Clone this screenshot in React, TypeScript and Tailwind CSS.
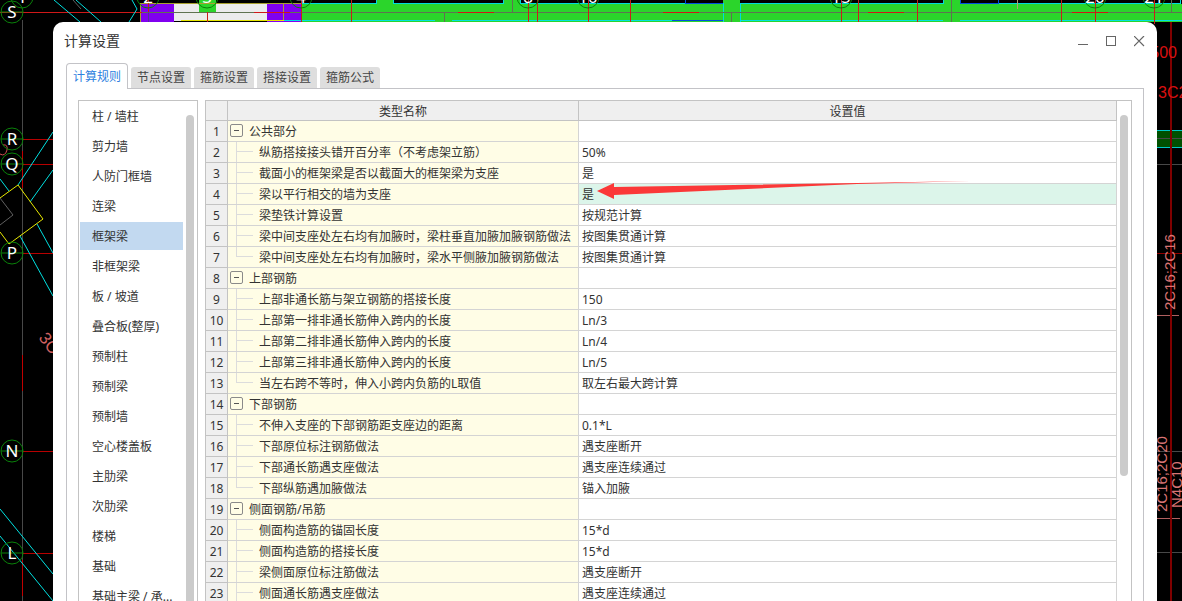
import React from "react";

type Row = { name: string; value?: string; group?: boolean; last?: boolean; active?: boolean };

const tabs = ["计算规则", "节点设置", "箍筋设置", "搭接设置", "箍筋公式"];

const components = [
  "柱 / 墙柱",
  "剪力墙",
  "人防门框墙",
  "连梁",
  "框架梁",
  "非框架梁",
  "板 / 坡道",
  "叠合板(整厚)",
  "预制柱",
  "预制梁",
  "预制墙",
  "空心楼盖板",
  "主肋梁",
  "次肋梁",
  "楼梯",
  "基础",
  "基础主梁 / 承...",
];

const rows: Row[] = [
  { name: "公共部分", group: true },
  { name: "纵筋搭接接头错开百分率（不考虑架立筋）", value: "50%" },
  { name: "截面小的框架梁是否以截面大的框架梁为支座", value: "是" },
  { name: "梁以平行相交的墙为支座", value: "是", active: true },
  { name: "梁垫铁计算设置", value: "按规范计算" },
  { name: "梁中间支座处左右均有加腋时，梁柱垂直加腋加腋钢筋做法", value: "按图集贯通计算" },
  { name: "梁中间支座处左右均有加腋时，梁水平侧腋加腋钢筋做法", value: "按图集贯通计算", last: true },
  { name: "上部钢筋", group: true },
  { name: "上部非通长筋与架立钢筋的搭接长度", value: "150" },
  { name: "上部第一排非通长筋伸入跨内的长度", value: "Ln/3" },
  { name: "上部第二排非通长筋伸入跨内的长度", value: "Ln/4" },
  { name: "上部第三排非通长筋伸入跨内的长度", value: "Ln/5" },
  { name: "当左右跨不等时，伸入小跨内负筋的L取值", value: "取左右最大跨计算", last: true },
  { name: "下部钢筋", group: true },
  { name: "不伸入支座的下部钢筋距支座边的距离", value: "0.1*L" },
  { name: "下部原位标注钢筋做法", value: "遇支座断开" },
  { name: "下部通长筋遇支座做法", value: "遇支座连续通过" },
  { name: "下部纵筋遇加腋做法", value: "锚入加腋", last: true },
  { name: "侧面钢筋/吊筋", group: true },
  { name: "侧面构造筋的锚固长度", value: "15*d" },
  { name: "侧面构造筋的搭接长度", value: "15*d" },
  { name: "梁侧面原位标注筋做法", value: "遇支座断开" },
  { name: "侧面通长筋遇支座做法", value: "遇支座连续通过" },
];

const leftAxes = [
  { label: "S", y: 12 },
  { label: "R", y: 139 },
  { label: "Q", y: 164 },
  { label: "P", y: 253 },
  { label: "N", y: 451 },
  { label: "L", y: 553 },
];

const topAxes = [
  { label: "1", x: 22 },
  { label: "2", x: 148 },
  { label: "3", x: 207 },
  { label: "4", x: 301 },
  { label: "8", x: 528 },
  { label: "10", x: 588 },
  { label: "15", x: 841 },
  { label: "20", x: 1095 },
  { label: "21", x: 1154 },
];

const Drawing = () => (
  <svg
    className="absolute top-0 left-0"
    width="1182"
    height="601"
    viewBox="0 0 1182 601"
    fill="none"
    shapeRendering="crispEdges"
    aria-hidden="true"
  >
    {/* beams along axis S */}
    <path d="M301 4H1182V22H301Z" fill="#2bd52b" />
    <path d="M376 0H393V5H376ZM503 0H520V5H503ZM723 0H740V5H723ZM943 0H960V5H943Z" fill="#2bd52b" />
    <path d="M140 4H174V22H140ZM267 4H301V22H267Z" fill="#8000f0" />
    <path d="M174 4H267V21H174Z" fill="#ececec" />
    <path d="M199 0H216V12H199Z" fill="#2bd52b" />
    <path d="M140.5 22V3.5H301M283.5 4V21" stroke="#a8a030" />
    <path d="M181 20.5H284" stroke="#e6e600" />
    <path d="M301 3.5H376.5V0M393.5 0V3.5H503.5V0M520.5 0V3.5H723.5V22M740.5 22V3.5H943.5V0M960.5 0V3.5H1180V0" stroke="#00dcdc" />
    <path d="M284 20.5H435M452 20.5H672M740 20.5H943M960 20.5H1182" stroke="#00e0e0" />
    <path d="M672 20.5H723M685.5 0V3.5H723M960.5 0V3.5H998V0" stroke="#0050e0" />
    <path d="M142 12.5H1182M444.5 12V22M512.5 0V12M731.5 12V22M951.5 0V22M1171.5 0V12" stroke="#5f7350" />
    <path d="M148.5 4V22" stroke="#55309a" />
    <path d="M0 12.5H142M254 12.5H290M458 12.5H494M663 12.5H699M868 12.5H904M1072 12.5H1108" stroke="#d01818" />
    <path d="M148.5 0V12M207.5 12V22M301.5 0V22M351.5 0V22M528.5 0V22M537.5 0V22M588.5 0V22M630.5 0V22M841.5 0V22M858.5 0V22M917.5 0V22M1061.5 0V22M1095.5 0V22M1154.5 0V24" stroke="#c82018" />
    <path d="M1017.5 0V9" stroke="#b0a070" />

    {/* left side */}
    <path d="M22.5 20V601" stroke="#484848" />
    <path d="M22.5 151V188M22.5 355V391M22.5 560V596" stroke="#c00000" />
    <path d="M23 139.5H53M23 164.5H53M23 253.5H53M23 451.5H53M23 553.5H53" stroke="#b80000" />
    <g shapeRendering="auto">
      <path
        d="M54 0L80 22M76 0L101 22M132 0L137 9L129 22M53 132L18 185M53 170L30 202M37 224L53 253M20 236L53 296M0 179L9 191M0 509L53 574M0 536L53 601"
        stroke="#00e0e0"
      />
      <path d="M0 198L18 185L43 219L9 244L0 232" stroke="#e8e800" />
      <path d="M73 0L81 9M0 198L13 215L0 225" stroke="#606060" />
      <path d="M0 154Q5 157 7 150Q8 144 3 145" stroke="#d05050" />
      <text x="38" y="338" transform="rotate(52 38 338)" fill="#d06060" fontFamily="Liberation Sans" fontSize="17">3C</text>
    </g>

    {/* right side */}
    <path d="M1157 130H1182V148H1157Z" fill="#005000" />
    <path d="M1157 130.5H1182M1157 147.5H1182" stroke="#00c8c8" />
    <path d="M1157 138.5H1182M1157 164.5H1182M1157 451.5H1182M1157 552.5H1182" stroke="#484848" />
    <path d="M1157 253.5H1182" stroke="#900000" />
    <path d="M1157 315.5H1179M1157 518.5H1180" stroke="#b06060" />
    <path d="M1171 22V601" stroke="#800000" strokeWidth="2" />
    <g fontFamily="Liberation Sans" fontSize="15">
      <g fill="#d81010" fontSize="16">
        <text x="1177" y="58" textAnchor="end">500</text>
        <text x="1158" y="98">3C2</text>
      </g>
      <g fill="#d87474">
        <text transform="translate(1175 310) rotate(-90)">2C16;2C16</text>
        <text transform="translate(1167 512) rotate(-90)">2C16;2C20</text>
        <text transform="translate(1182 508) rotate(-90)">N4C10</text>
      </g>
    </g>

    {/* axis bubbles */}
    <g shapeRendering="auto" fontFamily="Noto Sans" fontSize="17" textAnchor="middle">
      {leftAxes.map((a) => (
        <g key={a.label}>
          <circle cx="12" cy={a.y} r="11" stroke="#0a820a" />
          <path d={`M1 ${a.y}H23`} stroke="#0a820a" />
          <text x="12" y={a.y + 6} fill="#fff">{a.label}</text>
        </g>
      ))}
      {topAxes.map((a) => (
        <g key={a.label}>
          <circle cx={a.x} cy="-3" r="11" stroke="#0a820a" />
          <text x={a.x} y="3" fill="#fff">{a.label}</text>
        </g>
      ))}
    </g>
  </svg>
);

const TitleBar = () => (
  <header className="flex h-[38px] shrink-0 items-center justify-between pr-1 pl-[11px]">
    <h1 className="text-sm text-[#333]">计算设置</h1>
    <div className="flex">
      <button type="button" aria-label="最小化" className="flex size-7 items-center justify-center">
        <svg width="11" height="11" stroke="#666" shapeRendering="crispEdges">
          <path d="M0 8.5H10" />
        </svg>
      </button>
      <button type="button" aria-label="最大化" className="flex size-7 items-center justify-center">
        <svg width="11" height="11" stroke="#666" fill="none" shapeRendering="crispEdges">
          <path d="M0.5 0.5H9.5V9.5H0.5Z" />
        </svg>
      </button>
      <button type="button" aria-label="关闭" className="flex size-7 items-center justify-center">
        <svg width="11" height="11" stroke="#666" strokeWidth="1.2">
          <path d="M0 0L10 10M10 0L0 10" />
        </svg>
      </button>
    </div>
  </header>
);

const Tabs = () => (
  <div role="tablist" className="relative -mb-px flex items-end gap-[3px]">
    {tabs.map((tab, i) => (
      <button
        key={tab}
        type="button"
        role="tab"
        aria-selected={i === 0}
        className={
          i === 0
            ? "h-[26px] w-[62px] rounded-t border border-b-0 border-[#c3c3c7] bg-white text-[#2d7fe0]"
            : "mb-px h-[21px] w-[60px] rounded-t-[3px] bg-[#dedede] text-[#444]"
        }
      >
        {tab}
      </button>
    ))}
  </div>
);

const ComponentList = () => (
  <nav className="flex w-[120px] shrink-0 border border-b-0 border-[#c3c3c3]">
    <ul className="flex flex-1 flex-col gap-0.5 pt-px pl-px">
      {components.map((item) => (
        <li key={item}>
          <button
            type="button"
            className={`h-7 w-full pt-0.5 pl-3 text-left whitespace-nowrap ${item === "框架梁" ? "bg-[#c2d9f0]" : ""}`}
          >
            {item}
          </button>
        </li>
      ))}
    </ul>
    <div className="px-[3px] pt-3.5">
      <div className="h-full w-2 rounded-t-full bg-[#cbcbcb]" />
    </div>
  </nav>
);

const NameCell = ({ row }: { row: Row }) =>
  row.group ? (
    <div className="flex h-5 pl-0.5">
      <button
        type="button"
        aria-label="折叠"
        className="mt-[3px] flex size-[13px] items-center justify-center rounded-xs border border-[#8a8a8a]"
      >
        <span className="h-px w-[5px] bg-[#555]" />
      </button>
      <span className="ml-1.5 pt-[3px]">{row.name}</span>
    </div>
  ) : (
    <div className="flex h-5 pl-2">
      <div className="h-full w-[17px]">
        <div className="h-2.5 border-b border-l border-[#dcdcdc]" />
        {!row.last && <div className="h-2.5 border-l border-[#dcdcdc]" />}
      </div>
      <span className="ml-1.5 pt-[3px] whitespace-nowrap">{row.name}</span>
    </div>
  );

const Arrow = () => (
  <svg className="absolute -top-1 left-[18px]" width="376" height="20" viewBox="0 0 376 20" aria-hidden="true">
    <path d="M0 11L17 3V7L260 3L374 1L260 4L17 15V19Z" fill="#fb3838" />
  </svg>
);

const SettingsTable = () => (
  <div className="flex min-w-0 flex-1 border border-b-0 border-[#c3c3c3]">
    <table className="flex-1 table-fixed border-separate border-spacing-0 self-start">
      <colgroup>
        <col className="w-[22px]" />
        <col className="w-[351px]" />
        <col />
      </colgroup>
      <thead>
        <tr className="h-5 bg-[#efefef]">
          <th className="border-r border-b border-[#c3c3c3] p-0" />
          <th className="border-r border-b border-[#c3c3c3] p-0 pt-0.5 font-normal">类型名称</th>
          <th className="border-r border-b border-[#c3c3c3] p-0 pt-0.5 font-normal">设置值</th>
        </tr>
      </thead>
      <tbody>
        {rows.map((row, i) => (
          <tr key={i} className="h-[21px]">
            <td className="border-r border-b border-[#c3c3c3] bg-[#efefef] p-0 pt-0.5 text-center">{i + 1}</td>
            <td className="border-r border-b border-[#d4d4d4] bg-[#fffde6] p-0">
              <NameCell row={row} />
            </td>
            <td
              className={`relative border-r border-b border-[#d4d4d4] p-0 pt-0.5 pl-[3px] ${row.active ? "bg-[#dcf5ea]" : ""}`}
            >
              {row.value}
              {row.active && <Arrow />}
            </td>
          </tr>
        ))}
      </tbody>
    </table>
    <div className="px-[3px] pt-3.5">
      <div className="h-[361px] w-2 rounded-full bg-[#cbcbcb]" />
    </div>
  </div>
);

const App = () => {
  return (
    <div className="relative h-screen overflow-hidden bg-black pt-[22px] pr-[25px] pl-[53px] font-['Noto_Sans','Noto_Sans_CJK_SC',sans-serif] text-xs text-[#333]">
      <Drawing />
      <main className="relative flex h-full flex-col overflow-hidden rounded-t-[10px] bg-white">
        <TitleBar />
        <div className="flex min-h-0 flex-1 flex-col px-[13px] pt-[3px]">
          <Tabs />
          <div className="flex min-h-0 flex-1 gap-[7px] overflow-hidden border border-b-0 border-[#c3c3c7] p-[11px] pb-0">
            <ComponentList />
            <SettingsTable />
          </div>
        </div>
      </main>
    </div>
  );
};

export default App;
